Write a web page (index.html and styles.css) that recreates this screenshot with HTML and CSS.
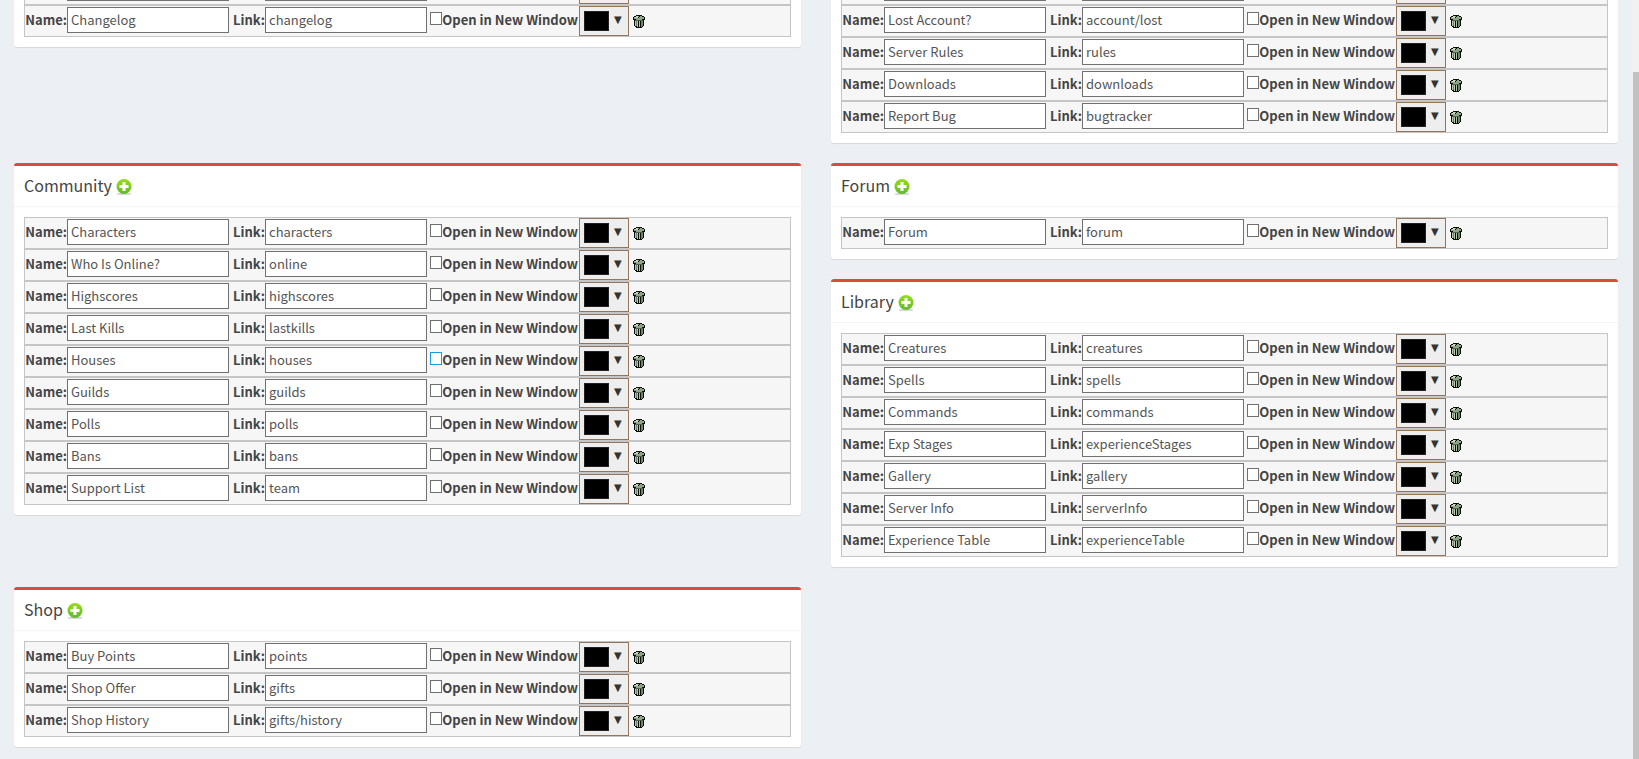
FILE: index.html
```
<!DOCTYPE html>
<html lang="en">
<head>
<meta charset="utf-8">
<title>Menus</title>
<link rel="stylesheet" href="styles.css">
</head>
<body>
<svg class="sprite" aria-hidden="true">
  <defs>
    <linearGradient id="green" x1="0" y1="0" x2="0" y2="1">
      <stop offset="0" stop-color="#96de14"/>
      <stop offset="1" stop-color="#62b832"/>
    </linearGradient>
  </defs>
  <symbol id="plus" viewBox="0 0 16 16">
    <rect x="1" y="14" width="14" height="2" rx="1" fill="#d8d8d8"/>
    <circle cx="8" cy="7.5" r="7.5" fill="url(#green)"/>
    <path d="M6.5 3h3v3h3v3h-3v3h-3V9h-3V6h3z" fill="#fff"/>
  </symbol>
  <symbol id="trash" viewBox="0 0 12 13" shape-rendering="crispEdges">
    <path d="M3 0h6v1h2v1h1v3h-1v6h-1v1H9v1H3v-1H2v-1H1V5H0V2h1V1h2z" fill="#0a0f0a"/>
    <path d="M3 1h6v1h2v2H9v1H3V4H1V2h2z" fill="#8fa588"/>
    <path d="M3 1h2v1H3zM2 2h3v1H2z" fill="#c9d6c2"/>
    <path d="M6 1h1v1H6zM5 2h1v1H5z" fill="#0a0f0a"/>
    <path d="M2 6h1v5H2zM4 6h1v6H4zM6 6h1v6H6z" fill="#b4c5ac"/>
    <path d="M3 6h1v5H3zM8 6h1v6H8zM9 6h1v5H9z" fill="#6f8668"/>
    <path d="M2 5h8v1H2z" fill="#50634b"/>
  </symbol>
</svg>
<div class="viewport">
<main class="menus">
  <section class="box scrolled">
    <ul class="list">
      <li class="item"><label><input type="text" aria-label="Name"></label><label><input type="text" aria-label="Link"></label><label class="check"><input type="checkbox" aria-label="New window"></label><button type="button" class="color" aria-label="Color"><span class="swatch"></span></button></li>
      <li class="item"><label>Name:<input type="text" value="Changelog"></label><label>Link:<input type="text" value="changelog"></label><label class="check"><input type="checkbox">Open in New Window</label><button type="button" class="color" aria-label="Color"><span class="swatch"></span><span class="arrow">▼</span></button><button type="button" class="icon" aria-label="Remove"><svg class="trash"><use href="#trash"/></svg></button></li>
    </ul>
  </section>
  <section class="box scrolled">
    <ul class="list">
      <li class="item"><label><input type="text" aria-label="Name"></label><label><input type="text" aria-label="Link"></label><label class="check"><input type="checkbox" aria-label="New window"></label><button type="button" class="color" aria-label="Color"><span class="swatch"></span></button></li>
      <li class="item"><label>Name:<input type="text" value="Lost Account?"></label><label>Link:<input type="text" value="account/lost"></label><label class="check"><input type="checkbox">Open in New Window</label><button type="button" class="color" aria-label="Color"><span class="swatch"></span><span class="arrow">▼</span></button><button type="button" class="icon" aria-label="Remove"><svg class="trash"><use href="#trash"/></svg></button></li>
      <li class="item"><label>Name:<input type="text" value="Server Rules"></label><label>Link:<input type="text" value="rules"></label><label class="check"><input type="checkbox">Open in New Window</label><button type="button" class="color" aria-label="Color"><span class="swatch"></span><span class="arrow">▼</span></button><button type="button" class="icon" aria-label="Remove"><svg class="trash"><use href="#trash"/></svg></button></li>
      <li class="item"><label>Name:<input type="text" value="Downloads"></label><label>Link:<input type="text" value="downloads"></label><label class="check"><input type="checkbox">Open in New Window</label><button type="button" class="color" aria-label="Color"><span class="swatch"></span><span class="arrow">▼</span></button><button type="button" class="icon" aria-label="Remove"><svg class="trash"><use href="#trash"/></svg></button></li>
      <li class="item"><label>Name:<input type="text" value="Report Bug"></label><label>Link:<input type="text" value="bugtracker"></label><label class="check"><input type="checkbox">Open in New Window</label><button type="button" class="color" aria-label="Color"><span class="swatch"></span><span class="arrow">▼</span></button><button type="button" class="icon" aria-label="Remove"><svg class="trash"><use href="#trash"/></svg></button></li>
    </ul>
  </section>
  <section class="box">
    <header class="head"><h3>Community</h3><button type="button" class="icon" aria-label="Add"><svg class="plus"><use href="#plus"/></svg></button></header>
    <ul class="list">
      <li class="item"><label>Name:<input type="text" value="Characters"></label><label>Link:<input type="text" value="characters"></label><label class="check"><input type="checkbox">Open in New Window</label><button type="button" class="color" aria-label="Color"><span class="swatch"></span><span class="arrow">▼</span></button><button type="button" class="icon" aria-label="Remove"><svg class="trash"><use href="#trash"/></svg></button></li>
      <li class="item"><label>Name:<input type="text" value="Who Is Online?"></label><label>Link:<input type="text" value="online"></label><label class="check"><input type="checkbox">Open in New Window</label><button type="button" class="color" aria-label="Color"><span class="swatch"></span><span class="arrow">▼</span></button><button type="button" class="icon" aria-label="Remove"><svg class="trash"><use href="#trash"/></svg></button></li>
      <li class="item"><label>Name:<input type="text" value="Highscores"></label><label>Link:<input type="text" value="highscores"></label><label class="check"><input type="checkbox">Open in New Window</label><button type="button" class="color" aria-label="Color"><span class="swatch"></span><span class="arrow">▼</span></button><button type="button" class="icon" aria-label="Remove"><svg class="trash"><use href="#trash"/></svg></button></li>
      <li class="item"><label>Name:<input type="text" value="Last Kills"></label><label>Link:<input type="text" value="lastkills"></label><label class="check"><input type="checkbox">Open in New Window</label><button type="button" class="color" aria-label="Color"><span class="swatch"></span><span class="arrow">▼</span></button><button type="button" class="icon" aria-label="Remove"><svg class="trash"><use href="#trash"/></svg></button></li>
      <li class="item"><label>Name:<input type="text" value="Houses"></label><label>Link:<input type="text" value="houses"></label><label class="check hovered"><input type="checkbox">Open in New Window</label><button type="button" class="color" aria-label="Color"><span class="swatch"></span><span class="arrow">▼</span></button><button type="button" class="icon" aria-label="Remove"><svg class="trash"><use href="#trash"/></svg></button></li>
      <li class="item"><label>Name:<input type="text" value="Guilds"></label><label>Link:<input type="text" value="guilds"></label><label class="check"><input type="checkbox">Open in New Window</label><button type="button" class="color" aria-label="Color"><span class="swatch"></span><span class="arrow">▼</span></button><button type="button" class="icon" aria-label="Remove"><svg class="trash"><use href="#trash"/></svg></button></li>
      <li class="item"><label>Name:<input type="text" value="Polls"></label><label>Link:<input type="text" value="polls"></label><label class="check"><input type="checkbox">Open in New Window</label><button type="button" class="color" aria-label="Color"><span class="swatch"></span><span class="arrow">▼</span></button><button type="button" class="icon" aria-label="Remove"><svg class="trash"><use href="#trash"/></svg></button></li>
      <li class="item"><label>Name:<input type="text" value="Bans"></label><label>Link:<input type="text" value="bans"></label><label class="check"><input type="checkbox">Open in New Window</label><button type="button" class="color" aria-label="Color"><span class="swatch"></span><span class="arrow">▼</span></button><button type="button" class="icon" aria-label="Remove"><svg class="trash"><use href="#trash"/></svg></button></li>
      <li class="item"><label>Name:<input type="text" value="Support List"></label><label>Link:<input type="text" value="team"></label><label class="check"><input type="checkbox">Open in New Window</label><button type="button" class="color" aria-label="Color"><span class="swatch"></span><span class="arrow">▼</span></button><button type="button" class="icon" aria-label="Remove"><svg class="trash"><use href="#trash"/></svg></button></li>
    </ul>
  </section>
  <div class="stack">
    <section class="box">
      <header class="head"><h3>Forum</h3><button type="button" class="icon" aria-label="Add"><svg class="plus"><use href="#plus"/></svg></button></header>
      <ul class="list">
        <li class="item"><label>Name:<input type="text" value="Forum"></label><label>Link:<input type="text" value="forum"></label><label class="check"><input type="checkbox">Open in New Window</label><button type="button" class="color" aria-label="Color"><span class="swatch"></span><span class="arrow">▼</span></button><button type="button" class="icon" aria-label="Remove"><svg class="trash"><use href="#trash"/></svg></button></li>
      </ul>
    </section>
    <section class="box">
      <header class="head"><h3>Library</h3><button type="button" class="icon" aria-label="Add"><svg class="plus"><use href="#plus"/></svg></button></header>
      <ul class="list">
        <li class="item"><label>Name:<input type="text" value="Creatures"></label><label>Link:<input type="text" value="creatures"></label><label class="check"><input type="checkbox">Open in New Window</label><button type="button" class="color" aria-label="Color"><span class="swatch"></span><span class="arrow">▼</span></button><button type="button" class="icon" aria-label="Remove"><svg class="trash"><use href="#trash"/></svg></button></li>
        <li class="item"><label>Name:<input type="text" value="Spells"></label><label>Link:<input type="text" value="spells"></label><label class="check"><input type="checkbox">Open in New Window</label><button type="button" class="color" aria-label="Color"><span class="swatch"></span><span class="arrow">▼</span></button><button type="button" class="icon" aria-label="Remove"><svg class="trash"><use href="#trash"/></svg></button></li>
        <li class="item"><label>Name:<input type="text" value="Commands"></label><label>Link:<input type="text" value="commands"></label><label class="check"><input type="checkbox">Open in New Window</label><button type="button" class="color" aria-label="Color"><span class="swatch"></span><span class="arrow">▼</span></button><button type="button" class="icon" aria-label="Remove"><svg class="trash"><use href="#trash"/></svg></button></li>
        <li class="item"><label>Name:<input type="text" value="Exp Stages"></label><label>Link:<input type="text" value="experienceStages"></label><label class="check"><input type="checkbox">Open in New Window</label><button type="button" class="color" aria-label="Color"><span class="swatch"></span><span class="arrow">▼</span></button><button type="button" class="icon" aria-label="Remove"><svg class="trash"><use href="#trash"/></svg></button></li>
        <li class="item"><label>Name:<input type="text" value="Gallery"></label><label>Link:<input type="text" value="gallery"></label><label class="check"><input type="checkbox">Open in New Window</label><button type="button" class="color" aria-label="Color"><span class="swatch"></span><span class="arrow">▼</span></button><button type="button" class="icon" aria-label="Remove"><svg class="trash"><use href="#trash"/></svg></button></li>
        <li class="item"><label>Name:<input type="text" value="Server Info"></label><label>Link:<input type="text" value="serverInfo"></label><label class="check"><input type="checkbox">Open in New Window</label><button type="button" class="color" aria-label="Color"><span class="swatch"></span><span class="arrow">▼</span></button><button type="button" class="icon" aria-label="Remove"><svg class="trash"><use href="#trash"/></svg></button></li>
        <li class="item"><label>Name:<input type="text" value="Experience Table"></label><label>Link:<input type="text" value="experienceTable"></label><label class="check"><input type="checkbox">Open in New Window</label><button type="button" class="color" aria-label="Color"><span class="swatch"></span><span class="arrow">▼</span></button><button type="button" class="icon" aria-label="Remove"><svg class="trash"><use href="#trash"/></svg></button></li>
      </ul>
    </section>
  </div>
  <section class="box">
    <header class="head"><h3>Shop</h3><button type="button" class="icon" aria-label="Add"><svg class="plus"><use href="#plus"/></svg></button></header>
    <ul class="list">
      <li class="item"><label>Name:<input type="text" value="Buy Points"></label><label>Link:<input type="text" value="points"></label><label class="check"><input type="checkbox">Open in New Window</label><button type="button" class="color" aria-label="Color"><span class="swatch"></span><span class="arrow">▼</span></button><button type="button" class="icon" aria-label="Remove"><svg class="trash"><use href="#trash"/></svg></button></li>
      <li class="item"><label>Name:<input type="text" value="Shop Offer"></label><label>Link:<input type="text" value="gifts"></label><label class="check"><input type="checkbox">Open in New Window</label><button type="button" class="color" aria-label="Color"><span class="swatch"></span><span class="arrow">▼</span></button><button type="button" class="icon" aria-label="Remove"><svg class="trash"><use href="#trash"/></svg></button></li>
      <li class="item"><label>Name:<input type="text" value="Shop History"></label><label>Link:<input type="text" value="gifts/history"></label><label class="check"><input type="checkbox">Open in New Window</label><button type="button" class="color" aria-label="Color"><span class="swatch"></span><span class="arrow">▼</span></button><button type="button" class="icon" aria-label="Remove"><svg class="trash"><use href="#trash"/></svg></button></li>
    </ul>
  </section>
</main>
<div class="scrollbar"><div class="thumb"></div></div>
</div>
</body>
</html>
```
FILE: styles.css
```
* { box-sizing: border-box; }
body {
  margin: 0;
  background: #ecf0f5;
  color: #454545;
  font: 13px/20px "Source Sans Pro", "Noto Sans CJK SC", sans-serif;
}
.sprite { position: absolute; width: 0; height: 0; }
.viewport { display: flex; height: 100vh; overflow: hidden; }
.menus {
  flex: 1;
  min-width: 0;
  display: grid;
  grid-template-columns: 1fr 1fr;
  align-content: start;
  align-items: start;
  gap: 20px 30px;
  padding: 0 15px 0 14px;
}
.stack { display: grid; gap: 20px; }
.box {
  background: #fff;
  border-top: 3px solid #dd4b39;
  border-radius: 3px;
  box-shadow: 0 1px 1px rgba(0, 0, 0, 0.1);
}
/* The first row of boxes is scrolled partly out of view. */
.scrolled { margin-top: -40px; }
.head {
  display: flex;
  align-items: center;
  gap: 4px;
  height: 41px;
  padding: 0 10px;
  border-bottom: 1px solid #f4f4f4;
}
h3 {
  margin: 0;
  padding-bottom: 2px;
  color: #444;
  font-size: 16px;
  font-weight: 400;
  line-height: 20px;
}
.list { margin: 0; padding: 10px; list-style: none; }
.item {
  display: flex;
  align-items: center;
  height: 32px;
  background: #f6f6f6;
  border: 1px solid #c5c5c5;
}
label {
  display: flex;
  align-items: center;
  justify-content: flex-end;
  width: 204px;
  height: 30px;
  padding-bottom: 2px;
  font-weight: 700;
  white-space: nowrap;
}
label + label { width: 195px; margin-left: 3px; }
label + .check { justify-content: flex-start; width: 148px; }
input[type="text"] {
  width: 162px;
  height: 26px;
  margin: 0;
  padding: 0 4px 2px 3px;
  border: 1px solid #707070;
  background: #fff;
  color: #555;
  font: inherit;
  font-weight: 400;
}
input[type="checkbox"] {
  appearance: none;
  width: 13px;
  height: 13px;
  margin: 0 0 3px;
  border: 1px solid #707070;
  background: #fff;
}
.hovered input[type="checkbox"] { border-color: #1e9bdc; }
.color {
  display: flex;
  align-items: center;
  gap: 5px;
  width: 50px;
  height: 30px;
  margin-left: 1px;
  padding: 0 4px;
  border: 1px solid #91765d;
  background: #eee;
  color: #333;
  font: 10px/16px "DejaVu Sans", sans-serif;
}
.swatch { width: 25px; height: 20px; border: 1px solid #222; background: #000; }
.arrow { height: 18px; }
.icon { display: flex; padding: 0; border: 0; background: none; }
.head .icon { padding-top: 2px; }
.item .icon { margin-left: 4px; }
.trash { width: 12px; height: 13px; }
.plus { width: 16px; height: 16px; }
.scrollbar { width: 6px; padding-top: 72px; background: #f1f1f1; }
.thumb { height: 100%; background: #c1c1c1; }
```
